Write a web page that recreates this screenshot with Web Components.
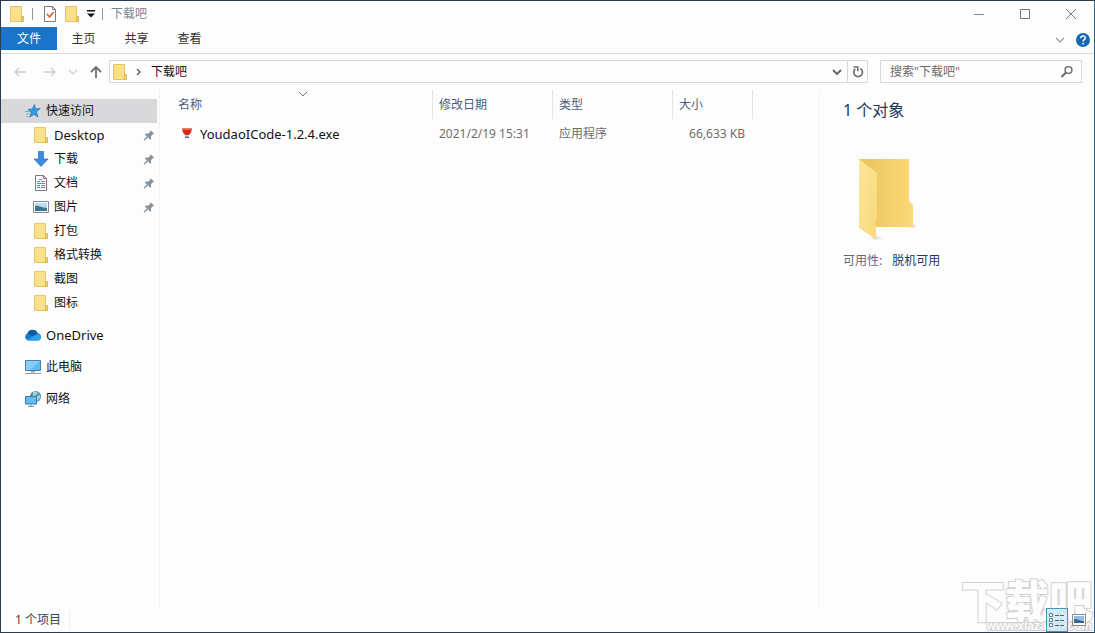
<!DOCTYPE html>
<html lang="zh-CN">
<head>
<meta charset="utf-8">
<title>下载吧</title>
<style>
html, body { margin: 0; height: 100%; }
body { font: 12px/16px "Noto Sans", "Noto Sans CJK SC", sans-serif; color: #111; background: #fdfdfd; overflow: hidden; }
</style>
</head>
<body>
<explorer-window>
  <title-bar slot="top">下载吧</title-bar>
  <ribbon-tabs slot="top"></ribbon-tabs>
  <address-bar slot="top">下载吧</address-bar>
  <nav-pane slot="nav">
    <nav-item icon="star" root selected>快速访问</nav-item>
    <nav-item icon="folder" pinned latin>Desktop</nav-item>
    <nav-item icon="download" pinned>下载</nav-item>
    <nav-item icon="document" pinned>文档</nav-item>
    <nav-item icon="picture" pinned>图片</nav-item>
    <nav-item icon="folder">打包</nav-item>
    <nav-item icon="folder">格式转换</nav-item>
    <nav-item icon="folder">截图</nav-item>
    <nav-item icon="folder">图标</nav-item>
    <nav-item icon="cloud" root spaced latin>OneDrive</nav-item>
    <nav-item icon="pc" root spaced>此电脑</nav-item>
    <nav-item icon="network" root spaced>网络</nav-item>
  </nav-pane>
  <file-table slot="files"></file-table>
  <details-pane slot="details"></details-pane>
  <status-bar slot="bottom">1 个项目</status-bar>
  <site-mark slot="mark"></site-mark>
</explorer-window>

<script>
const ICONS = {
  folder: [16, 18, `<path d="M1.500 1.500h11v11h2v4h-13z" fill="#fbe08a" stroke="#e6c565"/><path d="M12.500 11.500h2v5h-2z" fill="#f6d775" stroke="#dcb652"/>`],
  check: [14, 18, `<path d="M1.500 1.500h8l3 3v12h-11z" fill="#fdfdfd" stroke="#777b80"/><path d="M9.500 1.500v3h3" fill="none" stroke="#777b80"/><path d="M4 9l2.500 3 4-5" fill="none" stroke="#d9603f" stroke-width="1.600"/>`],
  custom: [8, 8, `<path d="M0 0h8v1.500H0zM0 3.500h8L4 7.500z" fill="#111"/>`],
  min: [12, 12, `<path d="M1 6.500h10" stroke="#888"/>`],
  max: [12, 12, `<path d="M1.500 1.500h9v9h-9z" fill="none" stroke="#777"/>`],
  close: [12, 12, `<path d="M1 1l10 10M11 1L1 11" stroke="#777"/>`],
  down: [10, 6, `<path d="M1 1l4 4 4-4" fill="none" stroke="currentColor" stroke-width="var(--w,1.200)"/>`],
  help: [16, 16, `<circle cx="8" cy="8" r="7" fill="#1469b3"/><path d="M5.800 6.200c0-3 4.600-2.800 4.500-.2 0 1.600-2.200 1.700-2.200 3.400M8.100 10.800v1.600" fill="none" stroke="#fff" stroke-width="1.500"/>`],
  back: [14, 14, `<path d="M13 7H2M6 3L2 7l4 4" fill="none" stroke="#ccc" stroke-width="1.300"/>`],
  forward: [14, 14, `<path d="M1 7h11M8 3l4 4-4 4" fill="none" stroke="#ccc" stroke-width="1.300"/>`],
  up: [14, 14, `<path d="M7 13V2M2 7l5-5 5 5" fill="none" stroke="#707070" stroke-width="1.800"/>`],
  crumb: [6, 8, `<path d="M1 1l3 3-3 3" fill="none" stroke="#666" stroke-width="1.500"/>`],
  refresh: [14, 14, `<path d="M9.300 3.400a4.400 4.400 0 1 1-5 .4" fill="none" stroke="#707070" stroke-width="1.700"/><path d="M2.500 2h4.300v4.300" fill="none" stroke="#707070" stroke-width="1.600"/>`],
  search: [14, 14, `<circle cx="8.500" cy="5" r="3.400" fill="none" stroke="#666" stroke-width="1.400"/><path d="M6 7.500L1.500 12" stroke="#666" stroke-width="2"/>`],
  star: [16, 16, `<path d="M9.500 1.500l.8 4.300 4.900-.2-3.900 3.200 1.800 5.200-4.200-2.600-4.200 2.700 1.500-4.700L3 6.500l4.300-.6z" fill="#3b98dc" stroke="#237dbf" stroke-width=".8"/><path d="M0 8.500h4M1 11h3M1 13.500h2" stroke="#65aee2"/>`],
  download: [16, 16, `<path d="M5.500 .500h5v7.500h4.500l-7 7.500-7-7.500h4.500z" fill="#3a8de0" stroke="#3379c2" stroke-width=".8"/>`],
  document: [16, 16, `<path d="M2.500 .500h8l3 3v12h-11z" fill="#fff" stroke="#6f7e89"/><path d="M10.500 .500v3h3" fill="none" stroke="#6f7e89"/><path d="M6 4.500h3M4 6.500h3M8 6.500h4M4 8.500h8M4 10.500h3M8 10.500h4M4 12.500h3M8 12.500h4" stroke="#3f98c8"/>`],
  picture: [16, 16, `<path d="M.500 2.500h15v11H.500z" fill="#fff" stroke="#7e8b95"/><path d="M2 4h12v8H2z" fill="#b9dcf2"/><path d="M2 7c4-1 6 2 12 2v2H2z" fill="#3f7a7c"/><path d="M2 10h12v2H2z" fill="#3b7096"/>`],
  cloud: [18, 16, `<path d="M4 13.500A3.700 3.700 0 0 1 3.300 6.500 5.500 5.500 0 0 1 13.700 6.200 3.700 3.700 0 0 1 14 13.500z" fill="#1678cc"/><path d="M3.500 6.500A5.500 5.500 0 0 1 13.600 6.200L9 9.500z" fill="#0c5aa6"/><path d="M3 13.200L10.500 8.500l3.500-1.500a3.400 3.400 0 0 1 2.500 5 3 3 0 0 1-2.500 1.500H4z" fill="#2ba3e8"/>`],
  pc: [18, 16, `<path d="M1.500 1.500h15v10h-15z" fill="#5bb9f3" stroke="#4c7fa3"/><path d="M2 2h14L6 11H2z" fill="#86cef8"/><path d="M7 12h4v1.500H7z" fill="#9aabb8"/><path d="M1 14.500h16" stroke="#8e9ba5"/>`],
  network: [18, 18, `<circle cx="11.500" cy="6.500" r="5.500" fill="#4f93bd"/><path d="M9 2l3-.5 2 1.500-2 2-3 1.500zM13 6l3-1v3l-3 3z" fill="#a5d3c7"/><path d="M1.500 6.500h11v7.500h-11z" fill="#5fbdf4" stroke="#3d7ba8"/><path d="M7 14v2M4 16.500h6" stroke="#7195ad"/>`],
  pin: [12, 12, `<path d="M7.500 1l3.800 3.700-1.300.2-2 2.300.2 2.600-1 .9L1.800 5.400l1-.9 2.400.1 2.200-2.100z" fill="#8b949c"/><path d="M4.500 7.800L1 11.200" stroke="#8b949c" stroke-width="1.400"/>`],
  exe: [14, 14, `<path d="M2 1.500h10l-1 4-2 2.500H5l-2-2.500z" fill="#d92b1c"/><path d="M2.500 1.500h9v1.500h-9z" fill="#ee6049"/><path d="M5.500 8h3l-.500 1.500h-2z" fill="#f0b5a5"/><path d="M5 9.500h4v1.500H5z" fill="#3c69d1"/>`],
  bigfolder: [60, 86, `<defs><linearGradient id="a"><stop offset="0" stop-color="#eac45d"/><stop offset="1" stop-color="#fad978"/></linearGradient><linearGradient id="b" x2="1" y2="1"><stop offset="0" stop-color="#fce69d"/><stop offset="1" stop-color="#f7d978"/></linearGradient><radialGradient id="s"><stop offset="0" stop-color="#aaa" stop-opacity=".5"/><stop offset="1" stop-color="#aaa" stop-opacity="0"/></radialGradient></defs><ellipse cx="18" cy="81" rx="7" ry="2.500" fill="url(#s)"/><ellipse cx="54" cy="69" rx="6" ry="2.500" fill="url(#s)"/><path d="M1 2h50v42l4 4v22H1z" fill="url(#a)"/><path d="M1 2l18 14v44l-1 3v19L1 71z" fill="url(#b)"/>`],
  list: [16, 14, `<path d="M.500 .500h3v3h-3zM.500 5.500h3v3h-3zM.500 10.500h3v3h-3z" fill="#fff" stroke="#667b88"/><path d="M6 2.500h4M11 2.500h4M6 7.500h4M11 7.500h4M6 12.500h4M11 12.500h4" stroke="#496477"/>`],
  thumb: [14, 12, `<path d="M.500 .500h13v11H.500z" fill="#fff" stroke="#888"/><path d="M2 2h10v7H2z" fill="#8cc0ea"/><path d="M2 5c4 0 5 2 10 2v2H2z" fill="#35668f"/>`]
};

function define(name, html, setup) {
  const template = document.createElement("template");
  template.innerHTML = html;
  customElements.define(name, class extends HTMLElement {
    connectedCallback() {
      if (this.shadowRoot) return;
      this.attachShadow({ mode: "open" }).append(template.content.cloneNode(true));
      if (setup) setup(this, this.shadowRoot);
    }
  });
}

const BUTTON = `button{font:inherit;color:inherit;background:none;border:0;padding:0;margin:0;display:flex;align-items:center;justify-content:center}`;

define("ui-icon", `<style>:host{display:block;flex:none}svg{display:block}</style>`, (el, root) => {
  const [w, h, body] = ICONS[el.getAttribute("name")];
  root.innerHTML += `<svg width="${w}" height="${h}" viewBox="0 0 ${w} ${h}" aria-hidden="true">${body}</svg>`;
});

define("explorer-window", `<style>
:host{display:flex;flex-direction:column;box-sizing:border-box;height:100vh;border:1px solid #2c3a49;border-right-color:#28668c;position:relative;background:#fdfdfd}
main{flex:1;min-height:0;display:grid;grid-template-columns:159px minmax(0,1fr) 275px}
</style><slot name="top"></slot><main><slot name="nav"></slot><slot name="files"></slot><slot name="details"></slot></main><slot name="mark"></slot><slot name="bottom"></slot>`);

define("title-bar", `<style>${BUTTON}
:host{display:flex;align-items:center;height:26px;padding-left:8px;color:#7b8590}
.sep{width:1px;height:12px;background:#999}
.quick{display:flex;align-items:center;gap:7px;margin-right:8px}
.quick .sep:not(:last-child){margin-right:3px}
h1{font:inherit;margin:0}
.win{display:flex;margin-left:auto}.win button{width:46px;height:26px}
</style><div class="quick"><ui-icon name="folder"></ui-icon><span class="sep"></span><button aria-label="属性"><ui-icon name="check"></ui-icon></button><button aria-label="新建文件夹"><ui-icon name="folder"></ui-icon></button><button aria-label="自定义"><ui-icon name="custom"></ui-icon></button><span class="sep"></span></div><h1><slot></slot></h1>
<div class="win"><button aria-label="最小化"><ui-icon name="min"></ui-icon></button><button aria-label="最大化"><ui-icon name="max"></ui-icon></button><button aria-label="关闭"><ui-icon name="close"></ui-icon></button></div>`);

define("ribbon-tabs", `<style>${BUTTON}
:host{display:flex;height:26px;border-bottom:1px solid #dcdcdc;color:#333}
.tab{width:53px;height:24px}.file{width:56px;height:23px;background:#1a74c8;color:#fff}
.end{display:flex;align-items:center;gap:10px;margin:0 3px 0 auto;color:#999}
</style><button class="tab file">文件</button><button class="tab">主页</button><button class="tab">共享</button><button class="tab">查看</button>
<div class="end"><button aria-label="展开功能区"><ui-icon name="down"></ui-icon></button><button aria-label="帮助"><ui-icon name="help"></ui-icon></button></div>`);

define("address-bar", `<style>${BUTTON}
:host{display:flex;align-items:center;height:35px;margin-bottom:1px;padding:0 12px;color:#111}
.go{display:flex;align-items:center;gap:16px;margin-right:6px}
.go .hist{margin:0 -5px;color:#ccc}
.path,.find{display:flex;align-items:center;box-sizing:border-box;height:23px;border:1px solid #d9d9d9}
.path{flex:1;padding-left:2px}
.path ui-icon[name=crumb]{margin:0 9px 0 8px}
.path button{width:20px;height:21px;color:#666;--w:2}
.path .drop{margin-left:auto}.path .re{border-left:1px solid #d9d9d9}
.find{width:202px;margin-left:12px;padding:0 7px 0 9px}
input{flex:1;min-width:0;border:0;outline:0;padding:0;background:none;font:inherit;color:#666}
input::placeholder{color:#6b6b6b;opacity:1}
</style><div class="go"><button aria-label="后退"><ui-icon name="back"></ui-icon></button><button aria-label="前进"><ui-icon name="forward"></ui-icon></button><button class="hist" aria-label="最近"><ui-icon name="down"></ui-icon></button><button aria-label="上移"><ui-icon name="up"></ui-icon></button></div>
<div class="path"><ui-icon name="folder"></ui-icon><ui-icon name="crumb"></ui-icon><slot></slot><button class="drop" aria-label="历史位置"><ui-icon name="down"></ui-icon></button><button class="re" aria-label="刷新"><ui-icon name="refresh"></ui-icon></button></div>
<div class="find"><input type="text" aria-label="搜索" placeholder='搜索"下载吧"'><button aria-label="开始搜索"><ui-icon name="search"></ui-icon></button></div>`);

define("nav-pane", `<style>:host{display:block;padding-top:9px;border-right:1px solid #f3f3f3}nav{display:block}</style><nav aria-label="导航"><slot></slot></nav>`);

define("nav-item", `<style>
:host{display:block}:host([spaced]){margin-top:8px}
a{display:flex;align-items:center;height:24px;margin-right:2px;padding:0 2px 0 32px;color:#111;text-decoration:none}
:host([root]) a{padding-left:24px}
:host([selected]) a{background:#d9d8db}
:host([latin]) a{font-size:13px}
.pic{width:16px;display:flex;justify-content:center;margin-right:5px}
:host([pinned]) .pin{margin-left:auto}
</style><a href="#"><span class="pic"></span><slot></slot></a>`, (el, root) => {
  const add = (parent, name, cls) => {
    const icon = document.createElement("ui-icon");
    icon.setAttribute("name", name);
    if (cls) icon.className = cls;
    parent.append(icon);
  };
  add(root.querySelector(".pic"), el.getAttribute("icon"));
  if (el.hasAttribute("pinned")) add(root.querySelector("a"), "pin", "pin");
});

define("file-table", `<style>
:host{display:block;padding-left:12px}
table{table-layout:fixed;width:581px;border-collapse:separate;border-spacing:0}
.n{width:261px}.d,.t{width:120px}.s{width:80px}
th,td{font-weight:400;text-align:left;padding:0 6px;white-space:nowrap;box-sizing:border-box}
th{height:29px;color:#4c607a;border-right:1px solid #e3e3e3}
td{height:30px;color:#6d6d6d}
.latin{font-size:13px}.size{text-align:right}
.name{display:flex;align-items:center;gap:6px;color:#111}
.head{position:relative}.head ui-icon{position:absolute;top:1px;left:126px;color:#777;--w:1}
.latin{padding-left:8px}.size{padding-right:8px}
</style><table><colgroup><col class="n"><col class="d"><col class="t"><col class="s"></colgroup>
<thead><tr><th class="head" scope="col">名称<ui-icon name="down"></ui-icon></th><th scope="col">修改日期</th><th scope="col">类型</th><th scope="col">大小</th></tr></thead>
<tbody><tr><td class="latin"><span class="name"><ui-icon name="exe"></ui-icon>YoudaoICode-1.2.4.exe</span></td><td>2021/2/19 15:31</td><td>应用程序</td><td class="size">66,633 KB</td></tr></tbody></table>`);

define("details-pane", `<style>
:host{display:block;border-left:1px solid #f3f3f3;padding:8px 0 0 23px;color:#22395c}
h2{font-size:16px;line-height:24px;font-weight:400;margin:0 0 35px}
ui-icon{margin:0 0 10px 15px}
dl{display:flex;gap:10px;margin:0}dt{color:#5c6b82}dd{margin:0}
</style><h2>1 个对象</h2><ui-icon name="bigfolder"></ui-icon><dl><dt>可用性:</dt><dd>脱机可用</dd></dl>`);

define("status-bar", `<style>${BUTTON}
:host{display:flex;align-items:center;height:24px;padding-left:14px;color:#33475f;position:relative}
.views{display:flex;margin-left:auto;margin-right:4px}
.count{padding-right:8px;border-right:1px solid #f0f0f0}
button{width:22px;height:24px;box-sizing:border-box}
.on{background:#cbe8f4cc;border:1px solid #3d9bb8}
</style><span class="count"><slot></slot></span><div class="views"><button class="on" aria-label="详细信息"><ui-icon name="list"></ui-icon></button><button aria-label="大图标"><ui-icon name="thumb"></ui-icon></button></div>`);

define("site-mark", `<style>
:host{position:absolute;right:1px;bottom:0;color:#fdfdfd;-webkit-text-stroke:2px #d0d0d0;paint-order:stroke fill}
b{display:block;font:900 44px/66px "Noto Sans CJK SC",sans-serif;white-space:nowrap}
small{position:absolute;right:1px;bottom:0;font:700 12px/12px "Liberation Sans",sans-serif}
</style><b>下载吧</b><small>www.xiazaiba.com</small>`);
</script>
</body>
</html>
